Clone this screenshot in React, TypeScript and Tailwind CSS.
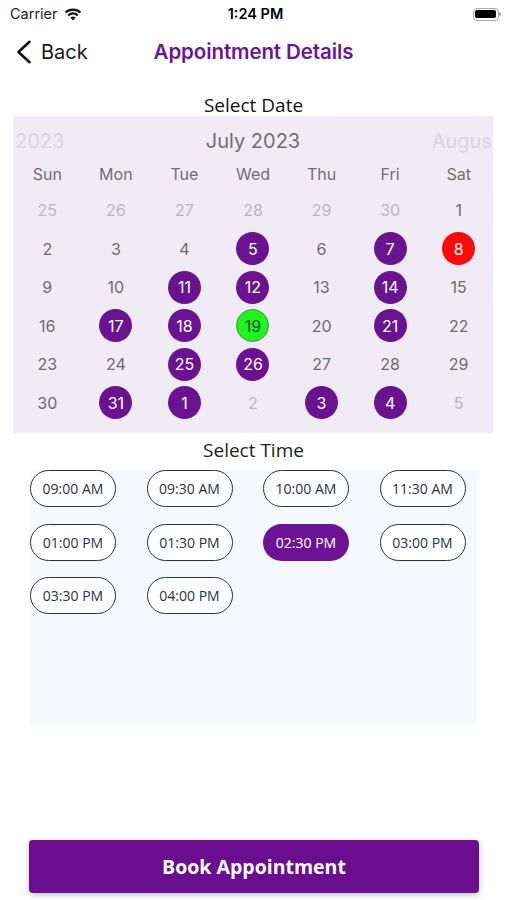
type Day = { n: number; kind: "muted" | "plain" | "booked" | "today" | "holiday" };

const rows: Day[][] = [
  [
    { n: 25, kind: "muted" },
    { n: 26, kind: "muted" },
    { n: 27, kind: "muted" },
    { n: 28, kind: "muted" },
    { n: 29, kind: "muted" },
    { n: 30, kind: "muted" },
    { n: 1, kind: "plain" },
  ],
  [
    { n: 2, kind: "plain" },
    { n: 3, kind: "plain" },
    { n: 4, kind: "plain" },
    { n: 5, kind: "booked" },
    { n: 6, kind: "plain" },
    { n: 7, kind: "booked" },
    { n: 8, kind: "holiday" },
  ],
  [
    { n: 9, kind: "plain" },
    { n: 10, kind: "plain" },
    { n: 11, kind: "booked" },
    { n: 12, kind: "booked" },
    { n: 13, kind: "plain" },
    { n: 14, kind: "booked" },
    { n: 15, kind: "plain" },
  ],
  [
    { n: 16, kind: "plain" },
    { n: 17, kind: "booked" },
    { n: 18, kind: "booked" },
    { n: 19, kind: "today" },
    { n: 20, kind: "plain" },
    { n: 21, kind: "booked" },
    { n: 22, kind: "plain" },
  ],
  [
    { n: 23, kind: "plain" },
    { n: 24, kind: "plain" },
    { n: 25, kind: "booked" },
    { n: 26, kind: "booked" },
    { n: 27, kind: "plain" },
    { n: 28, kind: "plain" },
    { n: 29, kind: "plain" },
  ],
  [
    { n: 30, kind: "plain" },
    { n: 31, kind: "booked" },
    { n: 1, kind: "booked" },
    { n: 2, kind: "muted" },
    { n: 3, kind: "booked" },
    { n: 4, kind: "booked" },
    { n: 5, kind: "muted" },
  ],
];

const weekDays = ["Sun", "Mon", "Tue", "Wed", "Thu", "Fri", "Sat"];

const times = [
  "09:00 AM",
  "09:30 AM",
  "10:00 AM",
  "11:30 AM",
  "01:00 PM",
  "01:30 PM",
  "02:30 PM",
  "03:00 PM",
  "03:30 PM",
  "04:00 PM",
];

function DayCell({ day }: { day: Day }) {
  const base = "w-[33px] h-[33px] rounded-full flex items-center justify-center text-[16px]";
  if (day.kind === "booked")
    return <div className={`${base} bg-[#691391] text-white`}>{day.n}</div>;
  if (day.kind === "holiday")
    return <div className={`${base} bg-[#ff0a0a] text-white`}>{day.n}</div>;
  if (day.kind === "today")
    return (
      <div className={`${base} bg-[#1df51d] border border-[#3f8f4a] text-[#2f4f36]`}>
        {day.n}
      </div>
    );
  return (
    <div
      className={`${base} ${day.kind === "muted" ? "text-[#b9b8bd]" : "text-[#6c6c71]"}`}
    >
      {day.n}
    </div>
  );
}

export default function App() {
  return (
    <div className="w-[507px] h-[900px] bg-white flex flex-col font-['Inter',sans-serif] overflow-hidden">
      {/* Status bar */}
      <div className="h-[28px] pl-[10px] pr-[6px] flex items-center justify-between text-[15px] text-black">
        <div className="flex items-center gap-[6px] w-[120px]">
          <span className="text-[14.5px] text-[#222]">Carrier</span>
          <svg width="18" height="13" viewBox="0 0 18 13">
            <path d="M9 12.5 L6.4 9.6 A3.8 3.8 0 0 1 11.6 9.6 Z" fill="#111" />
            <path d="M4.2 7.4 A6.8 6.8 0 0 1 13.8 7.4" stroke="#111" strokeWidth="2.1" fill="none" />
            <path d="M1.6 4.6 A10.6 10.6 0 0 1 16.4 4.6" stroke="#111" strokeWidth="2.1" fill="none" />
          </svg>
        </div>
        <span className="font-semibold text-[14.5px]">1:24 PM</span>
        <div className="w-[120px] flex justify-end">
          <div className="flex items-center">
            <div className="w-[26px] h-[13px] rounded-[4px] border border-[#aaa] p-[1.5px]">
              <div className="w-full h-full bg-black rounded-[2px]" />
            </div>
            <div className="w-[2px] h-[4px] bg-[#aaa] rounded-r-sm" />
          </div>
        </div>
      </div>

      {/* Nav */}
      <div className="h-[48px] grid grid-cols-[1fr_auto_1fr] items-center pl-[16px]">
        <div className="flex items-center gap-[9px]">
          <svg width="16" height="24" viewBox="0 0 16 24">
            <polyline
              points="13.5,1.8 2.5,12 13.5,22.2"
              fill="none"
              stroke="#111"
              strokeWidth="2.6"
              strokeLinecap="round"
              strokeLinejoin="round"
            />
          </svg>
          <span className="text-[20px] text-[#1a1a1a]">Back</span>
        </div>
        <span className="text-[20.5px] font-semibold text-[#6b1594] tracking-[-0.1px] -ml-[16px]">
          Appointment Details
        </span>
        <div />
      </div>

      {/* Select Date */}
      <div className="mt-[18px] h-[22px] leading-[22px] text-center text-[19px] text-[#111] font-['Open_Sans',sans-serif]">
        Select Date
      </div>

      <div className="mx-[13px] w-[480px] bg-[#f0ebf5] pb-[11px]">
        <div className="h-[46px] pt-[4px] grid grid-cols-[1fr_auto_1fr] items-center text-[20px] overflow-hidden">
          <div className="pl-[2px] text-[#d9d5de]">2023</div>
          <div className="text-[#707075]">July 2023</div>
          <div className="whitespace-nowrap text-right pr-[1px] text-[#d9d5de]">Augus</div>
        </div>
        <div className="h-[16px] grid grid-cols-7 items-center text-center text-[16px] text-[#707075]">
          {weekDays.map((d) => (
            <span key={d}>{d}</span>
          ))}
        </div>
        <div className="mt-[13px] flex flex-col">
          {rows.map((row, i) => (
            <div key={i} className="h-[38.5px] grid grid-cols-7 items-center">
              {row.map((d, j) => (
                <div key={j} className="flex justify-center">
                  <DayCell day={d} />
                </div>
              ))}
            </div>
          ))}
        </div>
      </div>

      {/* Select Time */}
      <div className="mt-[5px] h-[24px] leading-[24px] text-center text-[19px] text-[#18241a] font-['Open_Sans',sans-serif]">
        Select Time
      </div>
      <div className="mt-[8px] ml-[30px] w-[447px] h-[255px] bg-[#f5f8fc] font-['Open_Sans',sans-serif]">
        <div className="flex flex-wrap gap-x-[30.5px] gap-y-[16.5px]">
          {times.map((t) =>
            t === "02:30 PM" ? (
              <div
                key={t}
                className="w-[86px] h-[37px] rounded-full bg-[#6b1394] text-white text-[14px] flex items-center justify-center"
              >
                {t}
              </div>
            ) : (
              <div
                key={t}
                className="w-[86px] h-[37px] rounded-full border-[1.5px] border-[#283048] bg-white text-[#2b3148] text-[14px] flex items-center justify-center"
              >
                {t}
              </div>
            )
          )}
        </div>
      </div>

      {/* Book button */}
      <div className="mt-[115px] ml-[29px] w-[450px] h-[53px] rounded-[4px] bg-[#6b0d8f] shadow-[0_2px_6px_rgba(0,0,0,0.25)] flex items-center justify-center text-white font-bold text-[19.5px] font-['Open_Sans',sans-serif]">
        Book Appointment
      </div>
    </div>
  );
}
